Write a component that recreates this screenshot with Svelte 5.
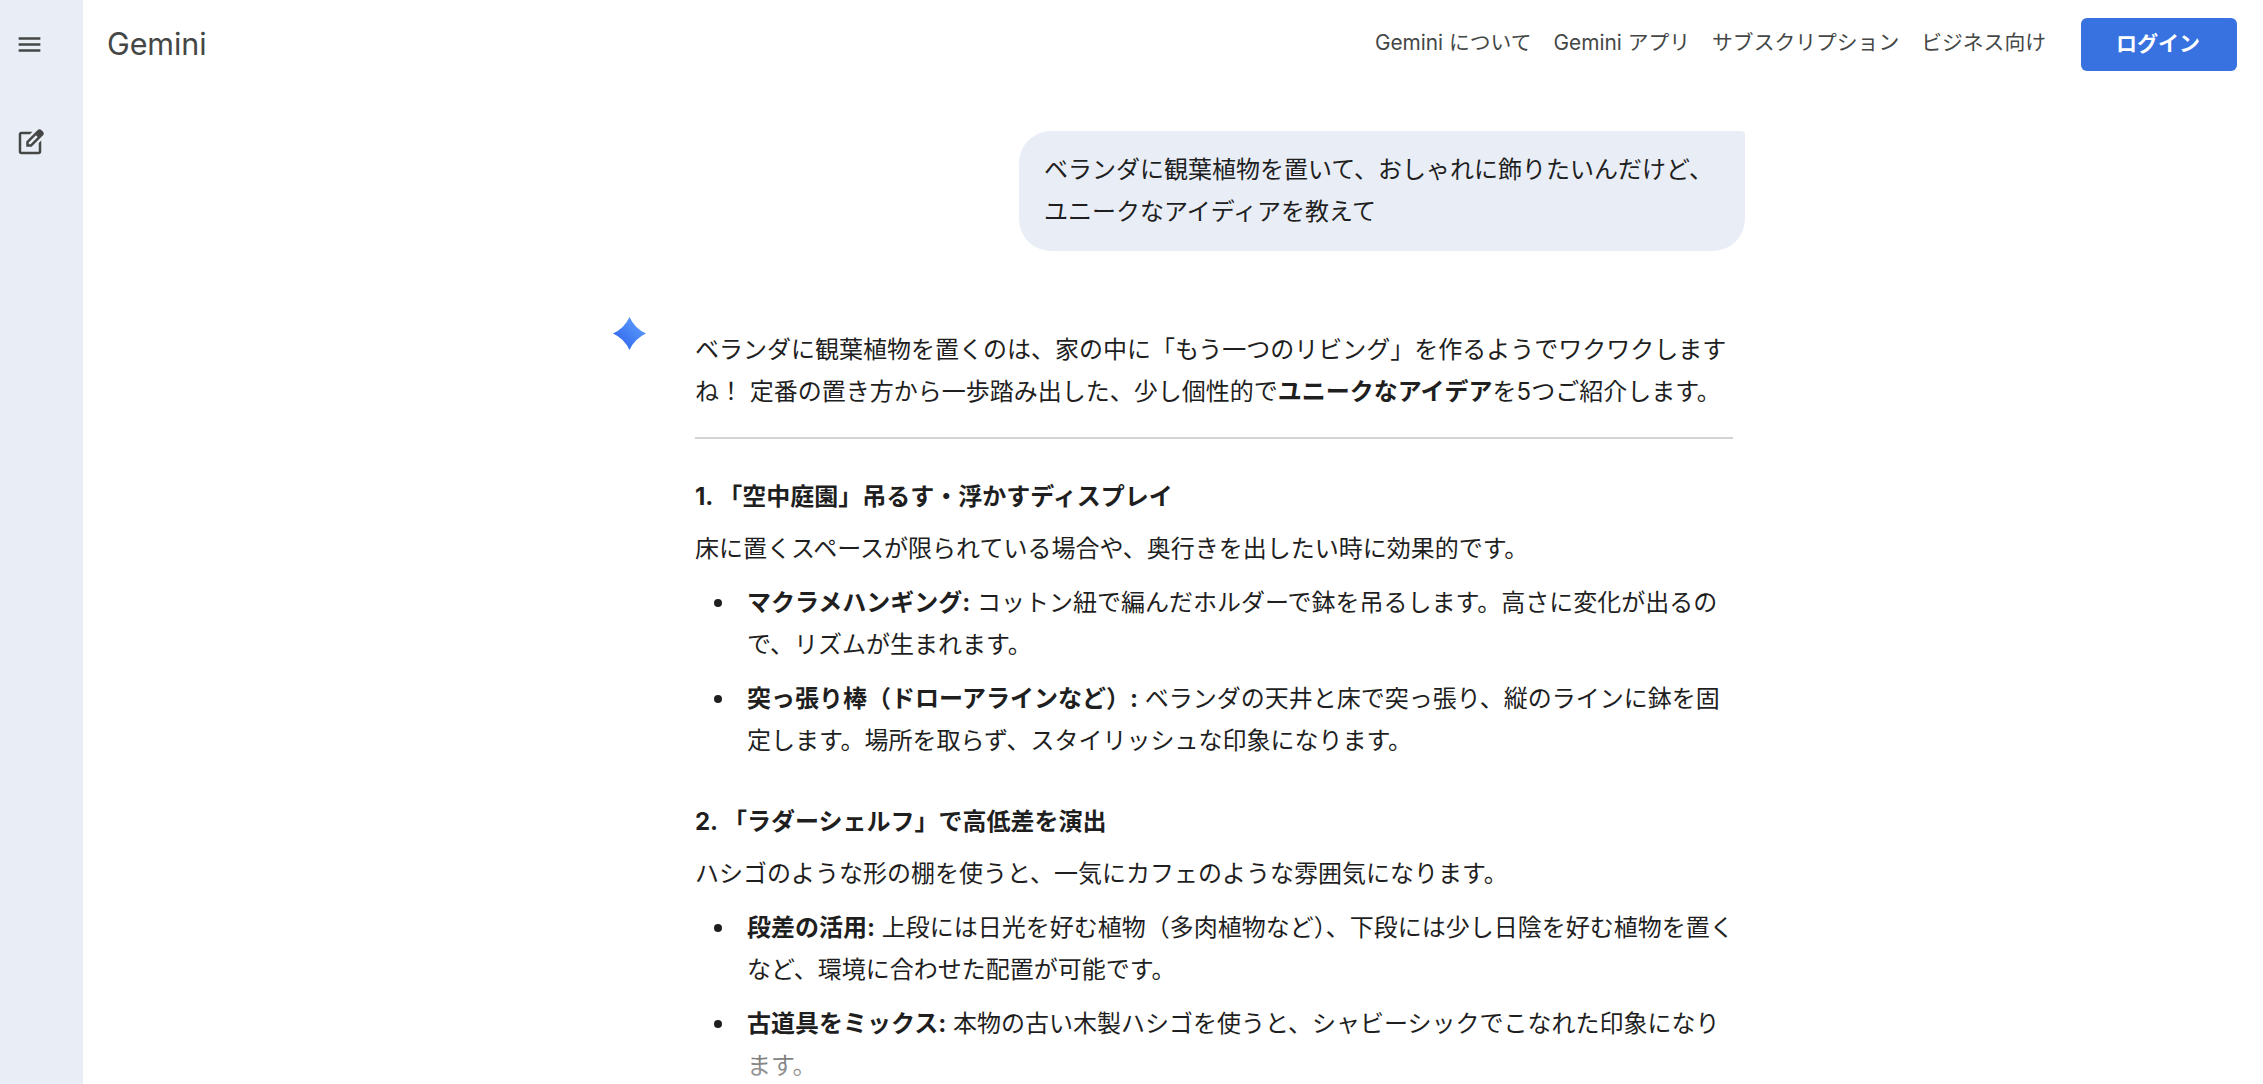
<script>
  const nav = ['Gemini について', 'Gemini アプリ', 'サブスクリプション', 'ビジネス向け'];
</script>

<div class="page">
  <aside class="rail">
    <button class="rail-btn menu" aria-label="メニュー">
      <svg viewBox="0 0 24 24" width="29" height="29"><path d="M3 18h18v-2H3v2zm0-5h18v-2H3v2zm0-7v2h18V6H3z" /></svg>
    </button>
    <button class="rail-btn edit" aria-label="新しいチャット">
      <svg viewBox="0 -960 960 960" width="30" height="30"><path d="M200-120q-33 0-56.5-23.5T120-200v-560q0-33 23.5-56.5T200-840h357l-80 80H200v560h560v-278l80-80v358q0 33-23.5 56.5T760-120H200Zm160-240v-170l367-367q12-12 27-18t30-6q16 0 30.5 6t26.5 18l56 57q11 12 17 26.5t6 29.5q0 15-5.5 29.5T897-728L530-360H360Zm80-80h56l232-232-28-28-29-28-231 231v57Z" /></svg>
    </button>
  </aside>

  <div class="main">
    <header class="top">
      <div class="logo">Gemini</div>
      <nav class="links">
        {#each nav as item}
          <span>{item}</span>
        {/each}
        <button class="login">ログイン</button>
      </nav>
    </header>

    <div class="chat">
      <div class="bubble">ベランダに観葉植物を置いて、おしゃれに飾りたいんだけど、<br />ユニークなアイディアを教えて</div>

      <div class="answer">
        <svg class="star" viewBox="0 0 32 32" width="33" height="33">
          <defs>
            <linearGradient id="sg" x1="0" y1="1" x2="1" y2="0">
              <stop offset="0.15" stop-color="#3268ee" />
              <stop offset="0.85" stop-color="#5b9bfa" />
            </linearGradient>
          </defs>
          <path d="M16 0Q21 11 32 16 21 21 16 32 11 21 0 16 11 11 16 0Z" fill="url(#sg)" />
        </svg>
        <div class="body">
          <p>ベランダに観葉植物を置くのは、家の中に「もう一つのリビング」を作るようでワクワクしますね！ 定番の置き方から一歩踏み出した、少し個性的で<b>ユニークなアイデア</b>を5つご紹介します。</p>
          <hr />
          <h3>1. 「空中庭園」吊るす・浮かすディスプレイ</h3>
          <p>床に置くスペースが限られている場合や、奥行きを出したい時に効果的です。</p>
          <ul>
            <li><b>マクラメハンギング:</b> コットン紐で編んだホルダーで鉢を吊るします。高さに変化が出るので、リズムが生まれます。</li>
            <li><b>突っ張り棒（ドローアラインなど）:</b> ベランダの天井と床で突っ張り、縦のラインに鉢を固定します。場所を取らず、スタイリッシュな印象になります。</li>
          </ul>
          <h3>2. 「ラダーシェルフ」で高低差を演出</h3>
          <p>ハシゴのような形の棚を使うと、一気にカフェのような雰囲気になります。</p>
          <ul>
            <li><b>段差の活用:</b> 上段には日光を好む植物（多肉植物など）、下段には少し日陰を好む植物を置くなど、環境に合わせた配置が可能です。</li>
            <li><b>古道具をミックス:</b> 本物の古い木製ハシゴを使うと、シャビーシックでこなれた印象になります。</li>
          </ul>
        </div>
      </div>
    </div>
    <div class="fade"></div>
  </div>
</div>

<style>
  :global(body) {
    margin: 0;
    background: #fff;
    overflow: hidden;
  }
  .page {
    display: flex;
    height: 1084px;
    overflow: hidden;
    font-family: Inter, "Noto Sans CJK JP", sans-serif;
    color: #1f1f1f;
  }
  .rail {
    flex: 0 0 83px;
    background: #e9eef6;
    display: flex;
    flex-direction: column;
    padding: 29px 0 0 15px;
    box-sizing: border-box;
  }
  .rail-btn {
    border: 0;
    background: none;
    padding: 0;
    width: 30px;
    height: 30px;
    display: block;
  }
  .rail-btn svg {
    display: block;
    fill: #444746;
  }
  .edit {
    margin-top: 69px;
  }
  .main {
    flex: 1;
    min-width: 0;
    position: relative;
  }
  .top {
    height: 88px;
    box-sizing: border-box;
    padding: 18px 26px 0 24px;
    display: flex;
    justify-content: space-between;
    align-items: flex-start;
  }
  .logo {
    font-size: 30.5px;
    line-height: 51px;
    color: #444746;
    letter-spacing: -0.1px;
  }
  .links {
    display: flex;
    align-items: center;
    gap: 22px;
    font-size: 20.8px;
    line-height: 49px;
    color: #444746;
    height: 53px;
  }
  .links span {
    margin-top: -4px;
  }
  .login {
    width: 156px;
    height: 53px;
    margin-left: 13px;
    border: 0;
    border-radius: 6px;
    background: #3871e0;
    color: #fff;
    font: 600 21px Inter, "Noto Sans CJK JP", sans-serif;
    padding: 0 2px 5px 0;
  }
  .chat {
    width: 1144px;
    margin: 43px auto 0;
    display: flex;
    flex-direction: column;
    font-size: 24px;
    line-height: 42px;
  }
  .bubble {
    align-self: flex-end;
    box-sizing: border-box;
    width: 726px;
    padding: 18px 20px 18px 25px;
    background: #e9eef6;
    border-radius: 32px 4px 32px 32px;
  }
  .answer {
    display: flex;
    margin-top: 78px;
    padding: 0 8px 0 12px;
    gap: 49px;
    align-items: flex-start;
  }
  .star {
    flex: none;
    margin-top: -12px;
  }
  .body {
    flex: 1;
    min-width: 0;
  }
  p {
    margin: 0;
  }
  b, h3 {
    font-weight: 700;
  }
  hr {
    border: 0;
    border-top: 2px solid #d3d3d3;
    margin: 24px 4px 37px 0;
  }
  h3 {
    font-size: 24px;
    margin: 0 0 10px;
  }
  ul {
    margin: 12px 0 39px;
    padding: 0 0 0 52px;
    list-style: none;
  }
  li {
    position: relative;
  }
  li::before {
    content: "";
    position: absolute;
    left: -33px;
    top: 17px;
    width: 8px;
    height: 8px;
    border-radius: 50%;
    background: #1f1f1f;
  }
  li + li {
    margin-top: 12px;
  }
  .fade {
    position: absolute;
    left: 0;
    right: 0;
    bottom: 0;
    height: 44px;
    background: linear-gradient(rgba(255, 255, 255, 0.3), rgba(255, 255, 255, 0.6));
  }
</style>
